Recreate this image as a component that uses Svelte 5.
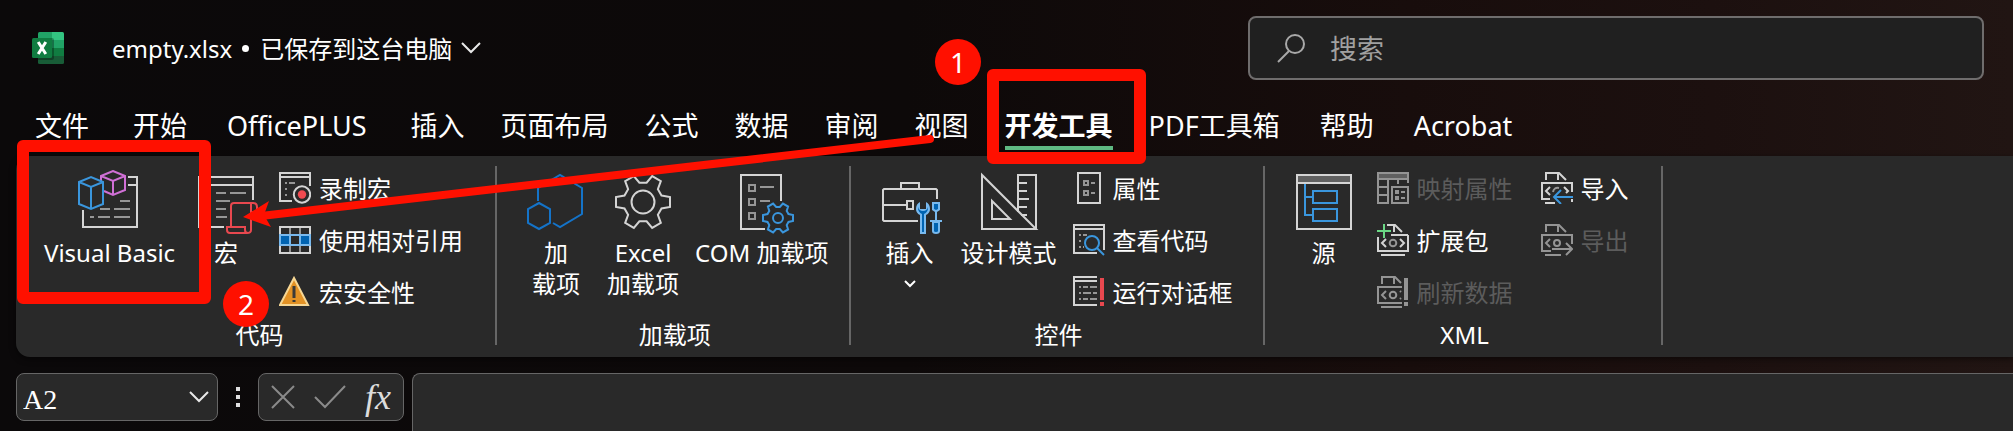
<script>
  const tabs = [
    { label: '文件', kind: 'file' },
    { label: '开始' },
    { label: 'OfficePLUS', kind: 'brand' },
    { label: '插入' },
    { label: '页面布局' },
    { label: '公式' },
    { label: '数据' },
    { label: '审阅' },
    { label: '视图' },
    { label: '开发工具', kind: 'active' },
    { label: 'PDF工具箱', kind: 'plugin' },
    { label: '帮助', kind: 'plugin' },
    { label: 'Acrobat' },
  ];

  const groups = [
    {
      label: '代码',
      large: [
        { icon: 'vb', lines: ['Visual Basic'] },
        { icon: 'macro', lines: ['宏'] },
      ],
      columns: [
        [
          { icon: 'record', label: '录制宏' },
          { icon: 'relative', label: '使用相对引用' },
          { icon: 'warning', label: '宏安全性' },
        ],
      ],
    },
    {
      label: '加载项',
      large: [
        { icon: 'hex', lines: ['加', '载项'] },
        { icon: 'gear', lines: ['Excel', '加载项'] },
        { icon: 'com', lines: ['COM 加载项'] },
      ],
      columns: [],
    },
    {
      label: '控件',
      tight: true,
      large: [
        { icon: 'toolbox', lines: ['插入'], menu: true },
        { icon: 'design', lines: ['设计模式'] },
      ],
      columns: [
        [
          { icon: 'props', label: '属性' },
          { icon: 'view', label: '查看代码' },
          { icon: 'dialog', label: '运行对话框' },
        ],
      ],
    },
    {
      label: 'XML',
      large: [{ icon: 'source', lines: ['源'] }],
      columns: [
        [
          { icon: 'map', label: '映射属性', disabled: true },
          { icon: 'expand', label: '扩展包' },
          { icon: 'refresh', label: '刷新数据', disabled: true },
        ],
        [
          { icon: 'import', label: '导入' },
          { icon: 'export', label: '导出', disabled: true },
        ],
      ],
    },
  ];

  // Six-toothed cog outline; `tip` and `base` are [radius, half width] of a tooth.
  function cog(cx, cy, tip, base) {
    const points = [];
    for (let i = 0; i < 6; i++) {
      const a = (i * Math.PI) / 3;
      for (const [x, y] of [[base[0], -base[1]], [tip[0], -tip[1]], [tip[0], tip[1]], [base[0], base[1]]]) {
        const px = cx + x * Math.cos(a) - y * Math.sin(a);
        const py = cy + x * Math.sin(a) + y * Math.cos(a);
        points.push(px.toFixed(2) + ',' + py.toFixed(2));
      }
    }
    return points.join(' ');
  }
</script>

{#snippet largeIcon(name)}
  <svg class="icon" width="64" height="64" viewBox="0 0 64 64" aria-hidden="true">
    {#if name === 'vb'}
      <path d="M50 7H59V57H5V40M50 15H59" />
      <path class="soft" d="M42 31H52M22 39H32M36 39H52M12 47H16M20 47H32M36 47H52" />
      <path class="purple" d="M23 12V6L35 1L47 6V20L35 25L26 21M23 6L35 11L47 6M35 11V25" />
      <path class="blue" d="M1 12L13 7L25 12V34L13 39L1 34ZM1 12L13 17L25 12M13 17V39" />
    {:else if name === 'macro'}
      <path d="M59 30V7H5V57H30M5 15H59" />
      <path class="soft" d="M12 23H16M22 23H32M36 23H52M12 31H16M22 31H36M12 39H16M22 39H32M12 47H16M22 47H33" />
      <path class="red" d="M37 57V36Q37 33 40 33H59Q63 33 63 37V42H57M57 33V60Q57 63 53 63H36Q33 63 33 60V57H51V60Q51 63 54 63" />
    {:else if name === 'hex'}
      <path class="deep" d="M14 31V18L36 5L58 18V44L36 57L29 53M15 33L26 39V53L15 59L4 53V39Z" />
    {:else if name === 'gear'}
      <polygon points={cog(32, 32, [27, 5], [18.5, 6.5])} />
      <circle cx="32" cy="32" r="11.5" />
    {:else if name === 'com'}
      <path d="M51 31V5H11V59H35" />
      <path class="soft" d="M19 15H25V21H19ZM19 29H25V35H19ZM19 43H25V49H19ZM30 17H44M30 31H40" />
      <polygon class="blue" points={cog(48, 48, [15, 3], [10.5, 4])} />
      <circle class="blue" cx="48" cy="48" r="5" />
    {:else if name === 'toolbox'}
      <path d="M23 19V13H41V19M59 29V20L58 19H6L5 20V50L6 51H40M5 35H29M29 31H35V39H29Z" />
      <path class="tool-edge" d="M42 64V45Q38 43 38 39Q38 34 42 32V39H48V32Q52 34 52 39Q52 43 48 45V64Z" />
      <path class="tool-core" d="M44 62V44Q40 42 40 38V37Q41 41 45 41Q49 41 50 37V38Q50 42 46 44V62Z" />
      <path class="tool-edge" d="M54 32H62V40L59 42V50H64V52H62V61Q62 64 58 64Q54 64 54 61V52H52V50H57V42L54 40Z" />
      <path class="tool-core" d="M56 34H60V39L58 40L56 39ZM56 53H60V61Q60 62 58 62Q56 62 56 61Z" />
    {:else if name === 'design'}
      <path d="M5 5V59H59ZM15 31V49H33ZM41 42V5H59V59M41 13H50M41 21H50M41 29H52M41 37H50M44 45H50" />
    {:else if name === 'source'}
      <path class="header-fill" d="M5 5H59V13H5Z" />
      <path d="M5 5H59V59H5ZM5 13H59" />
      <path class="blue" d="M13 14V45H21M13 27H21M21 21H45V33H21ZM21 39H45V51H21Z" />
    {/if}
  </svg>
{/snippet}

{#snippet smallIcon(name)}
  <svg class="icon" width="32" height="32" viewBox="0 0 32 32" aria-hidden="true">
    {#if name === 'record'}
      <path d="M31 14V1H1V29H13M1 5H31" />
      <path class="soft" d="M6 11H8M10 11H16M6 17H8M6 23H8" />
      <circle cx="23" cy="22.5" r="8.2" />
      <circle class="red-fill" cx="23" cy="22.5" r="4.2" />
    {:else if name === 'relative'}
      <path d="M1 3H31V29H1Z" />
      <path class="soft" d="M11 4V28M21 4V28" />
      <path class="cell-edge" d="M0 10H32V22H0Z" />
      <path class="cell-core" d="M2 12H10V20H2ZM22 12H30V20H22Z" />
      <path class="cell-empty" d="M12 12H20V20H12Z" />
    {:else if name === 'warning'}
      <path class="sign" d="M15 2L29 29H1Z" />
      <path class="sign-mark" d="M15 10V22M15 24V26" />
    {:else if name === 'props'}
      <path d="M5 1H27V31H5Z" />
      <path class="soft" d="M11 9H15V13H11ZM18 11H22M11 19H15V23H11ZM18 21H22" />
    {:else if name === 'view'}
      <path d="M31 26V1H1V29H24M1 5H31" />
      <path class="soft" d="M6 11H8M10 11H14M6 17H8M6 23H8M10 23H11" />
      <circle class="lens" cx="19" cy="19" r="7" />
      <path class="blue" d="M24 24L31 31" />
    {:else if name === 'dialog'}
      <path d="M24 1H1V29H24M1 5H24" />
      <path class="soft" d="M6 11H8M10 11H15M17 11H24M6 17H8M10 17H18M20 17H24M6 23H8M10 23H15M17 23H24" />
      <path class="red bar" d="M29 2V24M29 26V30" />
    {:else if name === 'map'}
      <path class="header-fill" d="M1 1H31V7H1Z" />
      <path d="M31 11V1H1V31H11V7M1 7H31M21 7V12M1 15H11M1 23H11M15 15H31V31H15Z" />
      <path d="M19 19H21V21H19ZM24 20H28M19 25H21V27H19ZM24 26H28" />
    {:else}
      {#if name === 'expand'}
        <path d="M10 1H18L25 8M17 1V8M31 11V27H1V13M14 11H31M4 31H28" />
        <path class="green" d="M7 0V14M0 7H14" />
      {:else if name === 'refresh'}
        <path d="M5 8V1H18L24 7M17 1V8M25 11H1V27H25M4 31H25" />
        <path class="bar" d="M29 2V24M29 26V30" />
      {:else if name === 'import'}
        <path d="M5 8V1H18L25 8M17 1V8M31 20V11H1V27H9M4 31H14M31 27V30" />
      {:else}
        <path d="M5 8V1H18L25 8M17 1V8M31 20V11H1V27H10M4 31H20" />
      {/if}
      <path d="M9 15L5 19L9 23" />
      {#if name === 'import'}
        <path class="soft" d="M12 20Q13 15 18 16" />
        <path d="M23 15L27 19L25 21" />
        <path class="blue" d="M32 25H13M20 18L13 25L20 32" />
      {:else if name === 'export'}
        <circle cx="16" cy="19" r="3" />
        <path d="M11 25H31M25 19L31 25L25 31" />
      {:else}
        <circle class="soft" cx="16" cy="19" r="3.3" />
        {#if name === 'refresh'}
          <path d="M23 15L24 16M23 23L24 22" />
        {:else}
          <path d="M23 15L27 19L23 23" />
        {/if}
      {/if}
    {/if}
  </svg>
{/snippet}

<div class="window">
  <header class="titlebar">
    <svg class="logo" width="32" height="32" viewBox="0 0 32 32" aria-hidden="true">
      <path fill="#21a366" d="M6 8V1.500Q6 0 7.500 0H20V8Z" />
      <path fill="#33c481" d="M20 0H30.500Q32 0 32 1.500V8H20Z" />
      <path fill="#107c41" d="M6 8H20V16H6Z" />
      <path fill="#21a366" d="M20 8H32V16H20Z" />
      <path fill="#185c37" d="M6 16H20V24H6Z" />
      <path fill="#107c41" d="M20 16H32V24H20Z" />
      <path fill="#185c37" d="M6 24H32V30.500Q32 32 30.500 32H7.500Q6 32 6 30.500Z" />
      <path fill="#000" opacity=".3" d="M6 6H20Q22 6 22 8V26Q22 28 20 28H6Z" />
      <rect fill="#107c41" y="6" width="20" height="20" rx="1.500" />
      <path fill="none" stroke="#fff" stroke-width="3" d="M6.200 10L13.800 22M13.800 10L6.200 22" />
    </svg>
    <button class="doc">
      <span>empty.xlsx</span><span class="dot"></span><span>已保存到这台电脑</span>
      <svg class="chevron" width="20" height="12" viewBox="0 0 20 12" aria-hidden="true"><path d="M1 1L10 10L19 1" /></svg>
    </button>
    <label class="search">
      <svg class="glass" width="30" height="30" viewBox="0 0 30 30" aria-hidden="true">
        <circle cx="19" cy="11" r="9" /><path d="M13 18L2 29" />
      </svg>
      <input type="search" placeholder="搜索" aria-label="搜索" />
    </label>
  </header>

  <nav class="tabs">
    {#each tabs as tab}
      <button class="tab {tab.kind ?? ''}">{tab.label}</button>
    {/each}
  </nav>

  <section class="ribbon">
    {#each groups as group}
      <div class="group" class:tight={group.tight}>
        <div class="body">
          {#each group.large as item}
            <button class="large">
              {@render largeIcon(item.icon)}
              {#each item.lines as line}<span>{line}</span>{/each}
              {#if item.menu}
                <svg class="caret" width="12" height="8" viewBox="0 0 12 8" aria-hidden="true"><path d="M1 1L6 6L11 1" /></svg>
              {/if}
            </button>
          {/each}
          {#each group.columns as column}
            <div class="column">
              {#each column as item}
                <button class="small" disabled={item.disabled}>
                  {@render smallIcon(item.icon)}
                  <span>{item.label}</span>
                </button>
              {/each}
            </div>
          {/each}
        </div>
        <div class="group-label">{group.label}</div>
      </div>
    {/each}
  </section>

  <section class="formula-bar">
    <div class="name-box">
      <input value="A2" size="4" aria-label="名称框" />
      <button aria-label="选择名称">
        <svg class="chevron" width="20" height="12" viewBox="0 0 20 12" aria-hidden="true"><path d="M1 1L10 10L19 1" /></svg>
      </button>
    </div>
    <div class="grip"><i></i><i></i><i></i></div>
    <div class="actions">
      <button aria-label="取消">
        <svg width="24" height="24" viewBox="0 0 24 24" aria-hidden="true"><path d="M1 1L23 23M23 1L1 23" /></svg>
      </button>
      <button aria-label="输入">
        <svg width="32" height="24" viewBox="0 0 32 24" aria-hidden="true"><path d="M1 12L11 22L31 1" /></svg>
      </button>
      <button class="fx">fx</button>
    </div>
    <textarea class="formula" aria-label="编辑栏"></textarea>
  </section>

  <svg class="arrow" width="700" height="110" viewBox="0 0 700 110" aria-hidden="true">
    <path class="shaft" d="M20 86L689 9" />
    <path class="head" d="M2 87L28 71L23 85L30 97Z" />
  </svg>
  <div class="frame frame-tab"></div>
  <div class="frame frame-button"></div>
  <span class="badge badge-one">1</span>
  <span class="badge badge-two">2</span>
</div>

<style>
  :global(body) {
    margin: 0;
    background: #0b090a;
  }

  .window {
    position: relative;
    display: flex;
    flex-direction: column;
    min-height: 100vh;
    overflow: hidden;
    background: linear-gradient(90deg, #0b090a 0%, #0d0909 45%, #180d0c 70%, #1c100f 85%, #211513 100%);
    color: #fff;
    font-family: 'Noto Sans', 'Noto Sans CJK SC', sans-serif;
    font-size: 24px;
    line-height: 31px;
  }

  button,
  input,
  textarea {
    margin: 0;
    padding: 0;
    border: 0;
    background: none;
    color: inherit;
    font: inherit;
    outline: none;
  }

  svg {
    display: block;
    flex: none;
  }

  .titlebar {
    display: flex;
    align-items: center;
    padding: 16px 29px 0 32px;
  }

  .doc {
    display: flex;
    align-items: center;
    margin: 0 auto 0 48px;
    white-space: nowrap;
  }

  .dot {
    width: 7px;
    height: 7px;
    margin: 0 11px 0 10px;
    border-radius: 50%;
    background: #fff;
  }

  .chevron {
    fill: none;
    stroke: #e8e8e8;
    stroke-width: 2;
  }

  .doc .chevron {
    margin-left: 9px;
  }

  .search {
    display: flex;
    flex: 0 1 736px;
    align-items: center;
    gap: 24px;
    box-sizing: border-box;
    height: 64px;
    padding: 0 26px;
    border: 2px solid #6f6d6d;
    border-radius: 8px;
    background: #202020;
    font-size: 27px;
  }

  .search input {
    flex: 1;
    min-width: 0;
  }

  .search input::placeholder {
    color: #a0a0a0;
    opacity: 1;
  }

  .glass {
    fill: none;
    stroke: #a8a8a8;
    stroke-width: 2;
  }

  .tabs {
    display: flex;
    gap: 36px;
    padding: 26px 35px 6px;
    font-size: 27px;
    line-height: 40px;
    white-space: nowrap;
  }

  .tab {
    border-bottom: 4px solid transparent;
  }

  .tab.file {
    padding-right: 8px;
  }

  .tab.brand {
    padding: 0 8px 0 4px;
  }

  .tab.plugin {
    padding-right: 4px;
  }

  .tab.active {
    border-image: linear-gradient(#5fb982, #5fb982) 1;
    border-width: 0 0 4px;
    font-weight: 700;
  }

  .ribbon {
    display: flex;
    margin-left: 16px;
    padding: 6px 0 7px 4px;
    border-radius: 14px 0 0 14px;
    background: #292929;
    box-shadow: 0 2px 6px #0008;
  }

  .group {
    position: relative;
    padding: 0 14px 0 16px;
    white-space: nowrap;
  }

  .group::after {
    content: '';
    position: absolute;
    top: 4px;
    right: 0;
    bottom: 5px;
    width: 2px;
    background: #666;
  }

  .body {
    display: flex;
    height: 157px;
  }

  .large {
    display: flex;
    flex-direction: column;
    align-items: center;
    min-width: 86px;
    padding: 8px 8px 0;
  }

  .large .icon {
    margin-bottom: 3px;
  }

  .caret {
    margin-top: 12px;
    fill: none;
    stroke: #fff;
    stroke-width: 2;
  }

  .column {
    display: flex;
    flex-direction: column;
    padding: 0 20px 0 10px;
  }

  .column + .column {
    padding-left: 8px;
  }

  .tight .column {
    padding: 0 18px 0 8px;
  }

  .small {
    display: flex;
    align-items: center;
    gap: 8px;
    height: 52px;
  }

  .small:disabled {
    color: #5c5c5c;
  }

  .group-label {
    line-height: 31px;
    text-align: center;
  }

  .icon {
    fill: none;
    stroke: #d4d4d4;
    stroke-width: 2;
  }

  .small:disabled .icon {
    stroke: #949494;
  }

  .soft {
    stroke: #969696;
  }

  .blue {
    stroke: #3a96dd;
  }

  .lens {
    fill: #292929;
    stroke: #3a96dd;
  }

  .deep {
    stroke: #1473c8;
  }

  .purple {
    stroke: #d070d6;
  }

  .red {
    stroke: #e8484f;
  }

  .green {
    stroke: #6bd885;
  }

  .bar {
    stroke-width: 4;
  }

  .red-fill {
    fill: #f04a50;
    stroke: none;
  }

  .header-fill {
    fill: #606060;
    stroke: none;
  }

  .tool-edge,
  .cell-edge {
    fill: #78b9ee;
    stroke: none;
  }

  .tool-core,
  .cell-core {
    fill: #0063b1;
    stroke: none;
  }

  .cell-empty {
    fill: #292929;
    stroke: none;
  }

  .sign {
    fill: #e39225;
    stroke: #f7d794;
  }

  .sign-mark {
    stroke: #3b3a39;
    stroke-width: 3;
  }

  .formula-bar {
    display: flex;
    flex: 1;
    align-items: flex-start;
    padding: 16px 0 0 16px;
  }

  .name-box,
  .actions {
    display: flex;
    align-items: center;
    box-sizing: border-box;
    height: 48px;
    border: 1px solid #666;
    border-radius: 8px;
    background: #292929;
  }

  .name-box {
    justify-content: space-between;
    width: 202px;
    padding: 0 8px 0 6px;
  }

  .name-box input {
    width: 120px;
    padding-top: 4px;
    font-family: 'Liberation Serif', serif;
    font-size: 28px;
  }

  .grip {
    display: flex;
    flex-direction: column;
    gap: 4px;
    padding: 14px 18px 0;
  }

  .grip i {
    width: 4px;
    height: 4px;
    background: #e0e0e0;
  }

  .actions {
    gap: 19px;
    padding: 0 12px;
  }

  .actions svg {
    fill: none;
    stroke: #8a8a8a;
    stroke-width: 2;
  }

  .fx {
    color: #dcdcdc;
    font-family: 'Liberation Serif', serif;
    font-size: 36px;
    font-style: italic;
  }

  .formula {
    flex: 1;
    align-self: stretch;
    margin-left: 8px;
    border: solid #666;
    border-width: 1px 0 0 1px;
    border-radius: 8px 0 0 0;
    background: #292929;
    resize: none;
  }

  .arrow {
    position: absolute;
    top: 130px;
    left: 241px;
  }

  .shaft {
    stroke: #ff1000;
    stroke-width: 8;
    stroke-linecap: round;
  }

  .head {
    fill: #ff1000;
  }

  .frame {
    position: absolute;
    box-sizing: border-box;
    border: 12px solid #ff1000;
    border-radius: 6px;
    pointer-events: none;
  }

  .frame-tab {
    top: 69px;
    left: 987px;
    width: 159px;
    height: 95px;
  }

  .frame-button {
    top: 140px;
    left: 17px;
    width: 194px;
    height: 164px;
  }

  .badge {
    position: absolute;
    width: 46px;
    height: 46px;
    border-radius: 50%;
    background: #ff1000;
    font-size: 28px;
    line-height: 46px;
    text-align: center;
  }

  .badge-one {
    top: 39px;
    left: 935px;
  }

  .badge-two {
    top: 281px;
    left: 223px;
  }
</style>
